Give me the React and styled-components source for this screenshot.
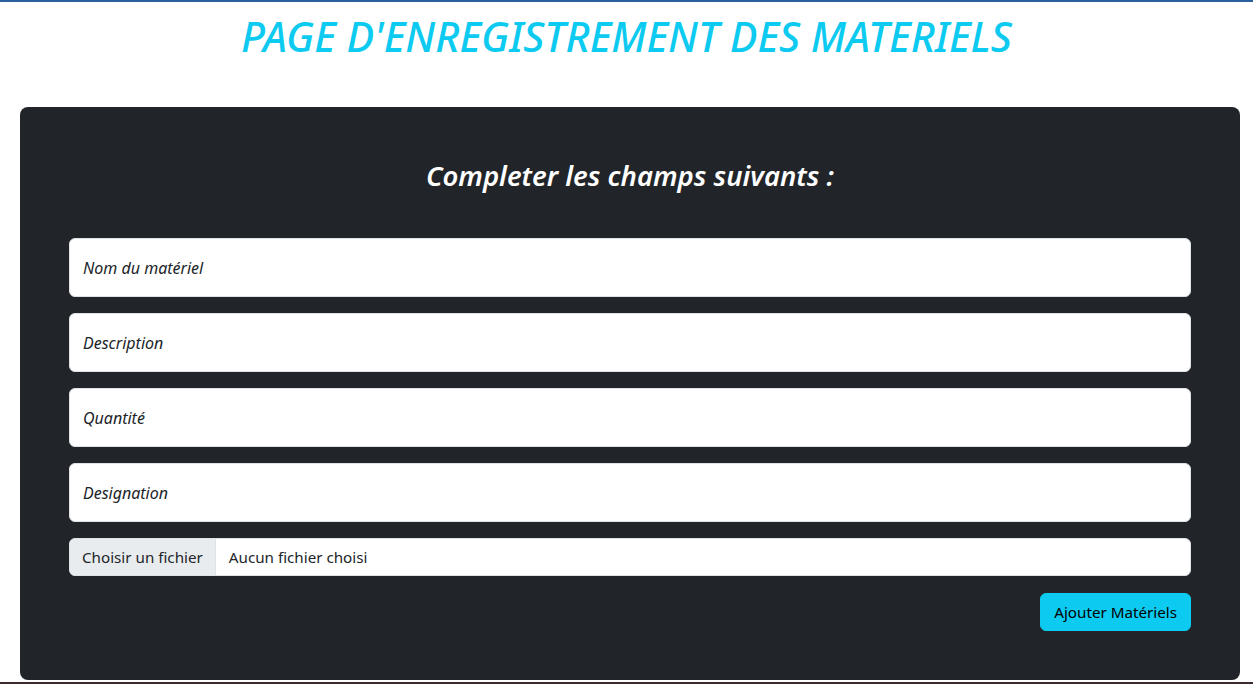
import styled, { createGlobalStyle } from 'styled-components';

const GlobalStyle = createGlobalStyle`
  html, body {
    margin: 0;
    padding: 0;
    background: #fff;
  }
  body {
    font-family: 'Noto Sans', 'Open Sans', sans-serif;
    color: #212529;
  }
`;

const Page = styled.div`
  min-height: 684px;
  border-top: 2px solid #2b5f9e;
  box-sizing: border-box;
  display: flex;
  flex-direction: column;
`;

const Title = styled.h1`
  margin: 10px 0 46px;
  text-align: center;
  font-size: 41.3px;
  line-height: 49px;
  font-weight: 500;
  font-style: italic;
  color: #0dcaf0;
`;

const Card = styled.form`
  margin: 0 13px 0 20px;
  padding: 50px 49px 49px;
  background: #212529;
  border-radius: 8px;
  display: flex;
  flex-direction: column;
  gap: 16px;
`;

const Heading = styled.h2`
  margin: 0 0 27px;
  text-align: center;
  font-size: 27.5px;
  line-height: 38px;
  font-weight: 600;
  font-style: italic;
  color: #fff;
`;

const Field = styled.input`
  height: 59px;
  box-sizing: border-box;
  padding: 0 13px;
  border: 1px solid #dee2e6;
  border-radius: 6px;
  background: #fff;
  font-family: inherit;
  font-size: 16px;
  color: #212529;

  &::placeholder {
    color: #212529;
    font-style: italic;
  }
`;

const FileBox = styled.label`
  display: flex;
  height: 38px;
  box-sizing: border-box;
  border: 1px solid #dee2e6;
  border-radius: 6px;
  background: #fff;
  overflow: hidden;
  font-size: 15.2px;
  color: #212529;
`;

const FileButton = styled.span`
  display: flex;
  align-items: center;
  padding: 0 12px;
  background: #e9ecef;
  border-right: 1px solid #dee2e6;
`;

const FileName = styled.span`
  display: flex;
  align-items: center;
  padding: 0 13px;
`;

const Actions = styled.div`
  display: flex;
  justify-content: flex-end;
  margin-top: 1px;
`;

const Submit = styled.button`
  height: 38px;
  padding: 0 13px;
  border: 1px solid #0dcaf0;
  border-radius: 6px;
  background: #0dcaf0;
  color: #000;
  font-family: inherit;
  font-size: 15.2px;
  cursor: pointer;
`;

const BottomRule = styled.div`
  margin-top: auto;
  height: 2px;
  background: #3a2a2a;
`;

const fields = ['Nom du matériel', 'Description', 'Quantité', 'Designation'];

export default function App() {
  return (
    <>
      <GlobalStyle />
      <Page>
        <Title>PAGE D'ENREGISTREMENT DES MATERIELS</Title>
        <Card onSubmit={(e) => e.preventDefault()}>
          <Heading>Completer les champs suivants :</Heading>
          {fields.map((f) => (
            <Field key={f} type="text" placeholder={f} />
          ))}
          <FileBox>
            <FileButton>Choisir un fichier</FileButton>
            <FileName>Aucun fichier choisi</FileName>
          </FileBox>
          <Actions>
            <Submit type="submit">Ajouter Matériels</Submit>
          </Actions>
        </Card>
        <BottomRule />
      </Page>
    </>
  );
}
